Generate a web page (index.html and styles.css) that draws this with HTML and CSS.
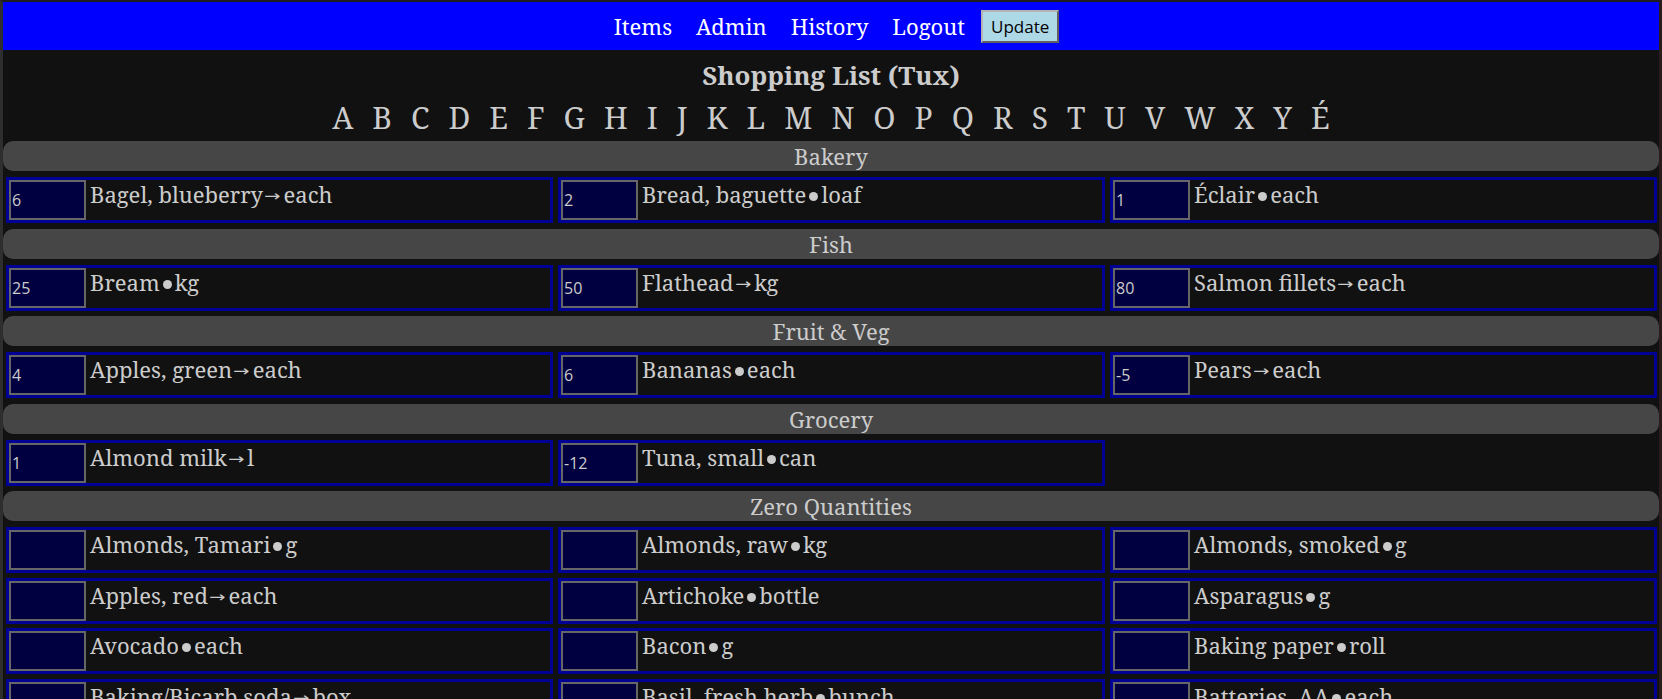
FILE: index.html
```html
<!DOCTYPE html>
<html lang="en">
<head>
<meta charset="utf-8">
<title>Shopping List (Tux)</title>
<link rel="stylesheet" href="styles.css">
</head>
<body>
<nav class="topnav">
  <a href="#">Items</a>
  <a href="#">Admin</a>
  <a href="#">History</a>
  <a href="#">Logout</a>
  <button class="update" type="button">Update</button>
</nav>
<h1 class="title">Shopping List (Tux)</h1>
<div class="letters">
  <a href="#">A</a><a href="#">B</a><a href="#">C</a><a href="#">D</a><a href="#">E</a><a href="#">F</a><a href="#">G</a><a href="#">H</a><a href="#">I</a><a href="#">J</a><a href="#">K</a><a href="#">L</a><a href="#">M</a><a href="#">N</a><a href="#">O</a><a href="#">P</a><a href="#">Q</a><a href="#">R</a><a href="#">S</a><a href="#">T</a><a href="#">U</a><a href="#">V</a><a href="#">W</a><a href="#">X</a><a href="#">Y</a><a href="#">É</a>
</div>

<section class="group">
  <div class="group-head">Bakery</div>
  <div class="grid">
    <div class="item"><input class="qty" value="6"><span class="label">Bagel, blueberry<span class="arrow">→</span>each</span></div>
    <div class="item"><input class="qty" value="2"><span class="label">Bread, baguette<span class="dot"></span>loaf</span></div>
    <div class="item"><input class="qty" value="1"><span class="label">Éclair<span class="dot"></span>each</span></div>
  </div>
</section>

<section class="group">
  <div class="group-head">Fish</div>
  <div class="grid">
    <div class="item"><input class="qty" value="25"><span class="label">Bream<span class="dot"></span>kg</span></div>
    <div class="item"><input class="qty" value="50"><span class="label">Flathead<span class="arrow">→</span>kg</span></div>
    <div class="item"><input class="qty" value="80"><span class="label">Salmon fillets<span class="arrow">→</span>each</span></div>
  </div>
</section>

<section class="group">
  <div class="group-head">Fruit &amp; Veg</div>
  <div class="grid">
    <div class="item"><input class="qty" value="4"><span class="label">Apples, green<span class="arrow">→</span>each</span></div>
    <div class="item"><input class="qty" value="6"><span class="label">Bananas<span class="dot"></span>each</span></div>
    <div class="item"><input class="qty" value="-5"><span class="label">Pears<span class="arrow">→</span>each</span></div>
  </div>
</section>

<section class="group">
  <div class="group-head">Grocery</div>
  <div class="grid">
    <div class="item"><input class="qty" value="1"><span class="label">Almond milk<span class="arrow">→</span>l</span></div>
    <div class="item"><input class="qty" value="-12"><span class="label">Tuna, small<span class="dot"></span>can</span></div>
  </div>
</section>

<section class="group">
  <div class="group-head">Zero Quantities</div>
  <div class="grid">
    <div class="item"><input class="qty" value=""><span class="label">Almonds, Tamari<span class="dot"></span>g</span></div>
    <div class="item"><input class="qty" value=""><span class="label">Almonds, raw<span class="dot"></span>kg</span></div>
    <div class="item"><input class="qty" value=""><span class="label">Almonds, smoked<span class="dot"></span>g</span></div>
    <div class="item"><input class="qty" value=""><span class="label">Apples, red<span class="arrow">→</span>each</span></div>
    <div class="item"><input class="qty" value=""><span class="label">Artichoke<span class="dot"></span>bottle</span></div>
    <div class="item"><input class="qty" value=""><span class="label">Asparagus<span class="dot"></span>g</span></div>
    <div class="item"><input class="qty" value=""><span class="label">Avocado<span class="dot"></span>each</span></div>
    <div class="item"><input class="qty" value=""><span class="label">Bacon<span class="dot"></span>g</span></div>
    <div class="item"><input class="qty" value=""><span class="label">Baking paper<span class="dot"></span>roll</span></div>
    <div class="item"><input class="qty" value=""><span class="label">Baking/Bicarb soda<span class="arrow">→</span>box</span></div>
    <div class="item"><input class="qty" value=""><span class="label">Basil, fresh herb<span class="dot"></span>bunch</span></div>
    <div class="item"><input class="qty" value=""><span class="label">Batteries, AA<span class="dot"></span>each</span></div>
  </div>
</section>
</body>
</html>
```

FILE: styles.css
```css
html {
  background: #111111;
}

body {
  margin: 0;
  min-height: 100vh;
  box-sizing: border-box;
  background: #111111;
  color: #cccccc;
  font-family: "Noto Serif", "DejaVu Serif", serif;
  font-size: 22px;
  border-top: 2px solid #1d1d1d;
  border-left: 3px solid #2e2e2e;
  border-right: 3px solid #2a1c1c;
}

.topnav {
  height: 48px;
  box-sizing: border-box;
  padding-left: 11px;
  background: #0000ff;
  display: flex;
  align-items: center;
  justify-content: center;
  gap: 24px;
}

.topnav a {
  color: #ffffff;
  text-decoration: none;
}

.update {
  margin-left: -8px;
  background: #add8e6;
  border: 2px outset #b4b4b4;
  font-family: "Open Sans", "Noto Sans", sans-serif;
  font-size: 17px;
  color: #000000;
  padding: 3px 8px;
  line-height: 23px;
}

.title {
  margin: 0;
  padding-top: 7px;
  font-size: 26px;
  font-weight: bold;
  text-align: center;
  line-height: normal;
}

.letters {
  display: flex;
  justify-content: center;
  gap: 19px;
  font-size: 30px;
  line-height: normal;
  margin: 4px 0 3px;
}

.letters a {
  color: #cccccc;
  text-decoration: none;
}

.group-head {
  background: #464646;
  border-radius: 10px;
  height: 30px;
  line-height: 30px;
  text-align: center;
}

.grid {
  display: grid;
  grid-template-columns: repeat(3, 1fr);
  column-gap: 5px;
  row-gap: 4.5px;
  padding: 6px 2px 5.5px 3px;
}

.item {
  display: flex;
  align-items: flex-start;
  border: 3px solid #000095;
  min-width: 0;
}

.qty {
  box-sizing: border-box;
  width: 77px;
  height: 40px;
  margin: 0;
  flex: none;
  background: #000040;
  border: 2px solid #666666;
  color: #cccccc;
  font-family: "Open Sans", "Noto Sans", sans-serif;
  font-size: 16px;
  padding: 0 1px;
}

.label {
  margin-left: 4px;
  margin-top: -1px;
  line-height: 30px;
  white-space: nowrap;
}

.arrow {
  display: inline-block;
  font-family: "DejaVu Sans", sans-serif;
  font-size: 15px;
  transform: scaleX(1.3);
  margin: 0 5px 0 3px;
  vertical-align: 2px;
}

.dot {
  display: inline-block;
  width: 9px;
  height: 9px;
  border-radius: 50%;
  background: #cccccc;
  margin: 0 3px;
  vertical-align: 2px;
}
```
